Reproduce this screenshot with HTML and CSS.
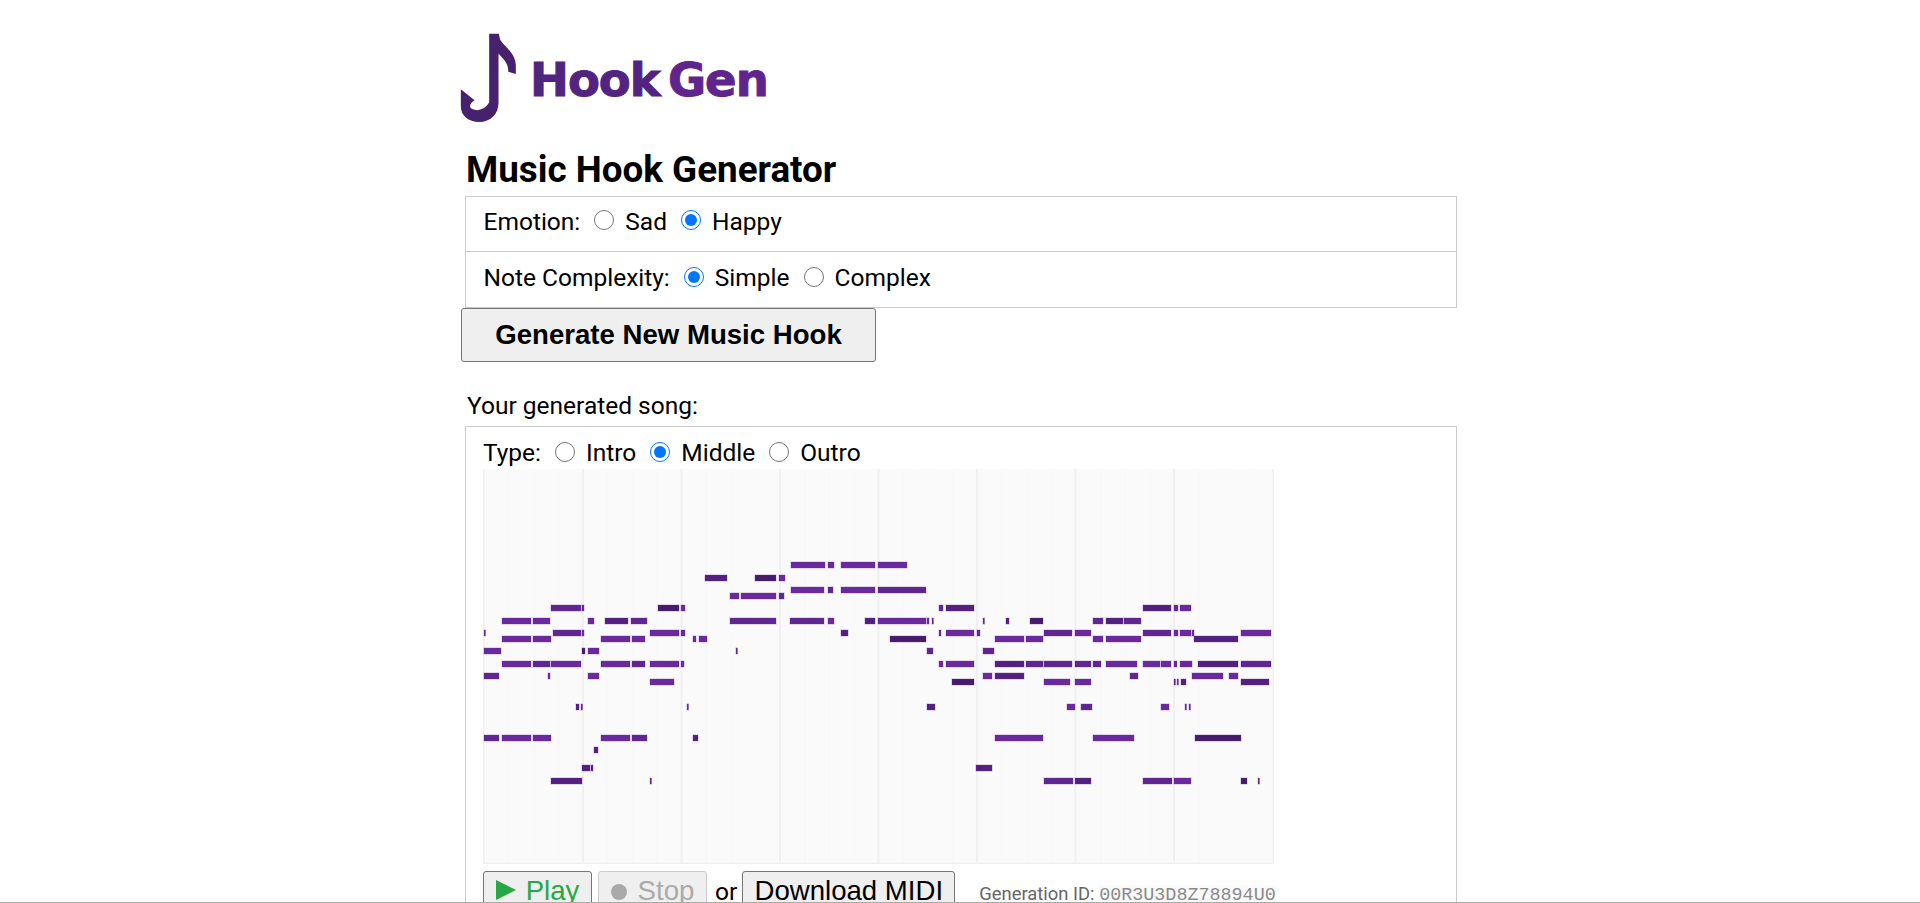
FILE: index.html
```html
<!DOCTYPE html>
<html lang="en">
<head>
  <meta charset="UTF-8">
  <title>Hook Gen - Music Hook Generator</title>
  <link rel="stylesheet" href="styles.css">
</head>
<body>
  <div class="page">
    <div class="logo">
      <svg class="logo-note" viewBox="60 68 170 270">
        <path fill="#46216e" d="M147 70 L176 70 L180 88 C192 108 226 128 227 165 L227 191 L204 184 C206 160 190 146 175 130 L175 278 C175 312 150 335 118 335 C84 335 62 316 62 288 L62 237 L103 270 C94 276 88 282 90 291 C100 304 132 304 147 276 Z"/>
      </svg>
      <span class="logo-text"><span class="logo-hook">Hook</span> <span class="logo-gen">Gen</span></span>
    </div>

    <h1>Music Hook Generator</h1>

    <!-- Pilihan lagu -->
    <div class="options">
      <div class="option-row">
        Emotion:
        <input type="radio" name="emotion" id="sad"><label for="sad">Sad</label>
        <input type="radio" name="emotion" id="happy" checked><label for="happy">Happy</label>
      </div>
      <div class="option-row">
        Note Complexity:
        <input type="radio" name="complexity" id="simple" checked><label for="simple">Simple</label>
        <input type="radio" name="complexity" id="complex"><label for="complex">Complex</label>
      </div>
    </div>
    <button class="btn-generate">Generate New Music Hook</button>

    <p class="song-label">Your generated song:</p>

    <div class="song-box">
      <div class="type-row">
        Type:
        <input type="radio" name="type" id="intro"><label for="intro">Intro</label>
        <input type="radio" name="type" id="middle" checked><label for="middle">Middle</label>
        <input type="radio" name="type" id="outro"><label for="outro">Outro</label>
      </div>

      <svg class="roll" viewBox="0 0 791 395">
        <defs>
          <pattern id="beats" x="1.5" y="0" width="98.6" height="395" patternUnits="userSpaceOnUse">
            <line x1="24.65" y1="0" x2="24.65" y2="395"/><line x1="49.3" y1="0" x2="49.3" y2="395"/><line x1="73.95" y1="0" x2="73.95" y2="395"/>
          </pattern>
        </defs>
        <rect class="beat-lines" width="791" height="395"/>
        <g class="bar">
          <line x1="0.5" y1="0" x2="0.5" y2="395"/><line x1="100" y1="0" x2="100" y2="395"/><line x1="198.5" y1="0" x2="198.5" y2="395"/>
          <line x1="297" y1="0" x2="297" y2="395"/><line x1="395.5" y1="0" x2="395.5" y2="395"/><line x1="494" y1="0" x2="494" y2="395"/>
          <line x1="592.5" y1="0" x2="592.5" y2="395"/><line x1="691" y1="0" x2="691" y2="395"/><line x1="790.5" y1="0" x2="790.5" y2="395"/>
          <line x1="0" y1="394.5" x2="791" y2="394.5"/>
        </g>

        <g class="notes">
          <rect x="308" y="93" width="34"/><rect x="345" y="93" width="6"/><rect x="358" y="93" width="34"/><rect x="395" y="93" width="29"/>

          <rect class="dark" x="222" y="106" width="22"/><rect class="darker" x="272" y="106" width="21"/><rect x="296" y="106" width="6"/>

          <rect x="308" y="118" width="33"/><rect class="mid" x="345" y="118" width="5"/><rect x="358" y="118" width="34"/><rect class="mid" x="395" y="118" width="48"/>

          <rect x="247" y="124" width="9"/><rect x="258" y="124" width="35"/><rect class="mid" x="296" y="124" width="5"/>

          <rect class="mid" x="68" y="136" width="30"/><rect class="mid" x="99" y="136" width="2"/><rect class="darker" x="175" y="136" width="21"/><rect x="198" y="136" width="4"/>
          <rect class="mid" x="456" y="136" width="4"/><rect class="dark" x="463" y="136" width="28"/><rect class="dark" x="660" y="136" width="28"/><rect x="691" y="136" width="4"/><rect x="697" y="136" width="11"/>

          <rect x="19" y="149" width="29"/><rect x="50" y="149" width="17"/><rect x="105" y="149" width="6"/><rect class="dark" x="122" y="149" width="23"/><rect class="mid" x="148" y="149" width="16"/>
          <rect class="mid" x="247" y="149" width="46"/><rect class="mid" x="307" y="149" width="34"/><rect x="345" y="149" width="6"/><rect class="dark" x="382" y="149" width="10"/><rect x="395" y="149" width="48"/>
          <rect x="444" y="149" width="2"/><rect x="449" y="149" width="1.5"/><rect x="500" y="149" width="1.5"/><rect class="dark" x="523" y="149" width="3"/><rect class="darker" x="547" y="149" width="13"/>
          <rect class="mid" x="610" y="149" width="10"/><rect class="dark" x="623" y="149" width="17"/><rect class="mid" x="641" y="149" width="17"/>

          <rect x="1" y="161" width="1.5"/><rect class="mid" x="70" y="161" width="28"/><rect x="99" y="161" width="2"/><rect x="167" y="161" width="29"/><rect x="198" y="161" width="4"/><rect class="dark" x="358" y="161" width="7"/>
          <rect x="456" y="161" width="2"/><rect x="463" y="161" width="28"/><rect class="mid" x="494" y="161" width="3"/><rect class="mid" x="561" y="161" width="28"/><rect x="592" y="161" width="16"/>
          <rect class="mid" x="660" y="161" width="28"/><rect x="691" y="161" width="4"/><rect x="697" y="161" width="11"/><rect x="709" y="161" width="2"/><rect x="758" y="161" width="30"/>

          <rect x="19" y="167" width="29"/><rect x="50" y="167" width="18"/><rect x="118" y="167" width="29"/><rect x="149" y="167" width="13"/><rect x="210" y="167" width="3"/><rect x="216" y="167" width="8"/>
          <rect class="darker" x="407" y="167" width="36"/><rect x="512" y="167" width="29"/><rect x="543" y="167" width="17"/><rect x="610" y="167" width="10"/><rect x="623" y="167" width="35"/><rect class="dark" x="711" y="167" width="44"/>

          <rect x="1" y="179" width="17"/><rect class="darker" x="99" y="179" width="3"/><rect x="105" y="179" width="11"/><rect x="253" y="179" width="1.5"/><rect class="mid" x="444" y="179" width="6"/><rect class="mid" x="500" y="179" width="11"/>

          <rect x="19" y="192" width="29"/><rect class="mid" x="50" y="192" width="17"/><rect x="68" y="192" width="30"/><rect x="118" y="192" width="29"/><rect class="mid" x="149" y="192" width="13"/><rect x="167" y="192" width="29"/><rect x="198" y="192" width="3"/>
          <rect x="456" y="192" width="4"/><rect x="463" y="192" width="28"/><rect class="dark" x="512" y="192" width="29"/><rect class="mid" x="543" y="192" width="17"/><rect class="mid" x="561" y="192" width="28"/><rect class="mid" x="592" y="192" width="16"/>
          <rect class="mid" x="610" y="192" width="8"/><rect x="623" y="192" width="31"/><rect x="660" y="192" width="17"/><rect x="678" y="192" width="10"/><rect x="691" y="192" width="3"/><rect x="697" y="192" width="12"/><rect class="dark" x="715" y="192" width="40"/><rect class="mid" x="758" y="192" width="30"/>

          <rect class="mid" x="1" y="204" width="15"/><rect x="65" y="204" width="2"/><rect x="105" y="204" width="11"/><rect x="500" y="204" width="9"/><rect class="dark" x="512" y="204" width="29"/><rect class="mid" x="647" y="204" width="8"/><rect x="709" y="204" width="31"/><rect x="746" y="204" width="9"/>

          <rect x="167" y="210" width="24"/><rect class="darker" x="469" y="210" width="22"/><rect x="561" y="210" width="26"/><rect x="592" y="210" width="16"/><rect x="691" y="210" width="1.5"/><rect x="694" y="210" width="1.5"/><rect class="dark" x="698" y="210" width="5"/><rect class="dark" x="758" y="210" width="28"/>

          <rect class="dark" x="93" y="235" width="3"/><rect class="mid" x="98" y="235" width="1.5"/><rect x="204" y="235" width="1.5"/><rect class="dark" x="444" y="235" width="8"/><rect x="584" y="235" width="8"/><rect class="mid" x="598" y="235" width="11"/><rect x="678" y="235" width="8"/><rect x="702" y="235" width="1.5"/><rect x="706" y="235" width="1.5"/>

          <rect class="mid" x="1" y="266" width="15"/><rect x="19" y="266" width="29"/><rect x="50" y="266" width="18"/><rect x="118" y="266" width="29"/><rect class="mid" x="149" y="266" width="15"/><rect class="dark" x="210" y="266" width="5"/>
          <rect x="512" y="266" width="48"/><rect x="610" y="266" width="41"/><rect class="darker" x="712" y="266" width="46"/>

          <rect class="dark" x="111" y="278" width="4"/>

          <rect class="dark" x="99" y="296" width="8"/><rect class="dark" x="108" y="296" width="2"/><rect class="dark" x="493" y="296" width="16"/>

          <rect class="dark" x="68" y="309" width="31"/><rect x="167" y="309" width="1.5"/><rect class="mid" x="561" y="309" width="29"/><rect class="dark" x="592" y="309" width="16"/><rect class="mid" x="660" y="309" width="29"/><rect x="691" y="309" width="17"/><rect class="darker" x="758" y="309" width="6"/><rect x="775" y="309" width="1.5"/>
        </g>
      </svg>

      <div class="player">
        <button class="btn-play"><span class="tri"></span>Play</button>
        <button class="btn-stop" disabled><span class="dot"></span>Stop</button>
        <span class="or">or</span>
        <button class="btn-midi">Download MIDI</button>
        <span class="gen-id">Generation ID: <code>00R3U3D8Z78894U0</code></span>
      </div>
    </div>
  </div>
  <div class="footer-line"></div>
</body>
</html>
```

FILE: styles.css
```css
html, body {
  height: 100%;
  overflow: hidden;
}

body {
  margin: 0;
  background: white;
  font-family: Roboto, sans-serif;
  font-size: 24.5px;
  color: black;
}

.page {
  width: 992px;
  margin-left: 465px;
}

.logo {
  display: flex;
  align-items: flex-start;
  height: 141px;
  margin-left: -5px;
  padding-top: 33px;
  box-sizing: border-box;
}

.logo-note {
  width: 57px;
  height: 90px;
}

.logo-text {
  margin: 17px 0 0 13px;
  font-family: "DejaVu Sans", sans-serif;
  font-weight: 700;
  font-size: 46.5px;
  line-height: 60px;
  letter-spacing: -1px;
  word-spacing: -7px;
  white-space: nowrap;
  -webkit-text-stroke: 1px;
}

.logo-hook {
  color: #522480;
}

.logo-gen {
  color: #60258c;
}

h1 {
  margin: 0 0 0 1px;
  font-size: 36.8px;
  font-weight: 700;
  line-height: 57px;
  height: 55px;
}

.options {
  border: 1px solid #ccc;
  box-sizing: border-box;
  height: 112px;
}

.option-row {
  display: flex;
  align-items: center;
  height: 54px;
  padding: 0 0 6px 17.5px;
  box-sizing: border-box;
}

.option-row + .option-row {
  height: 56px;
  padding-bottom: 4px;
  border-top: 1px solid #ccc;
}

input[type="radio"] {
  width: 20px;
  height: 20px;
  margin: 0 11px 0 14px;
  position: relative;
  top: -1px;
}

label {
  display: inline-block;
}

.btn-generate {
  display: block;
  width: 415px;
  height: 54px;
  margin: 0 0 0 -4px;
  padding: 0;
  background: #efefef;
  border: 1px solid #767676;
  border-radius: 3px;
  font-family: "Liberation Sans", Arial, sans-serif;
  font-weight: 700;
  font-size: 27.6px;
  color: black;
}

.song-label {
  margin: 0 0 0 2px;
  height: 64px;
  padding-top: 28px;
  box-sizing: border-box;
  line-height: 32px;
}

.song-box {
  border: 1px solid #ccc;
  box-sizing: border-box;
  height: 520px;
  padding-left: 17px;
}

.type-row {
  display: flex;
  align-items: center;
  height: 42px;
  padding-top: 9px;
  box-sizing: border-box;
}

.roll {
  display: block;
  width: 791px;
  height: 395px;
  background: #fafafa;
}

.beat-lines {
  fill: url(#beats);
}

#beats line {
  stroke: #f8f8f8;
  stroke-width: 1;
}

.bar line {
  stroke: #f0f0f0;
  stroke-width: 2;
}

.notes rect {
  height: 6px;
  fill: #6a2a9e;
  stroke: rgba(106, 42, 158, 0.35);
  stroke-width: 1;
}

.notes rect.mid {
  fill: #5f268f;
}

.notes rect.dark {
  fill: #532080;
}

.notes rect.darker {
  fill: #451c68;
}

.player {
  display: flex;
  align-items: flex-start;
  margin-top: 7px;
}

.player button {
  height: 40px;
  padding: 0;
  background: #efefef;
  border: 1px solid #767676;
  border-radius: 3px;
  font-family: "Liberation Sans", Arial, sans-serif;
  font-size: 27.6px;
  color: black;
}

.player .btn-play {
  width: 109px;
  color: #28a745;
}

.player .btn-stop {
  width: 109px;
  margin-left: 6px;
  color: #aaa;
  border-color: #ccc;
}

.tri {
  display: inline-block;
  width: 0;
  height: 0;
  margin-right: 10px;
  border-left: 20px solid #28a745;
  border-top: 10px solid transparent;
  border-bottom: 10px solid transparent;
}

.dot {
  display: inline-block;
  width: 16px;
  height: 16px;
  margin-right: 11px;
  border-radius: 50%;
  background: #aaa;
}

.or {
  margin: 6px 5px 0 8px;
}

.btn-midi {
  width: 213px;
}

.gen-id {
  margin: 12px 0 0 24px;
  font-size: 18.4px;
  color: #666;
}

.gen-id code {
  font-family: "Liberation Mono", monospace;
  font-size: 18.4px;
  color: #8a8a8a;
  background: #fafafa;
}

.footer-line {
  position: fixed;
  left: 0;
  right: 0;
  bottom: 0;
  height: 1px;
  background: #aaa;
}
```
